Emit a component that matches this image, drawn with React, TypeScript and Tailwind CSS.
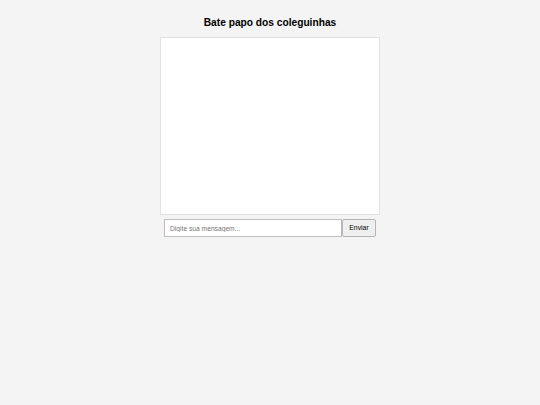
export default function App() {
  return (
    <div className="min-h-[405px] w-full bg-[#f4f4f4] flex flex-col items-center pt-[15px]" style={{ fontFamily: '"Liberation Sans", Arial, sans-serif' }}>
      <h1 className="text-[10.2px] leading-[16px] font-bold text-black mb-[6px]">Bate papo dos coleguinhas</h1>
      <div className="w-[220px] h-[178px] bg-white border border-[#e2e2e2]" />
      <div className="flex w-[212px] mt-[4px]">
        <input
          type="text"
          placeholder="Digite sua mensagem..."
          className="w-[178px] h-[18px] px-[5px] bg-white border border-[#bdbdbd] text-[6.7px] text-black placeholder:text-[#777] outline-none"
        />
        <button className="w-[34px] h-[18px] bg-[#efefef] border border-[#b5b5b5] rounded-[2px] text-[6.9px] text-black">
          Enviar
        </button>
      </div>
    </div>
  )
}
